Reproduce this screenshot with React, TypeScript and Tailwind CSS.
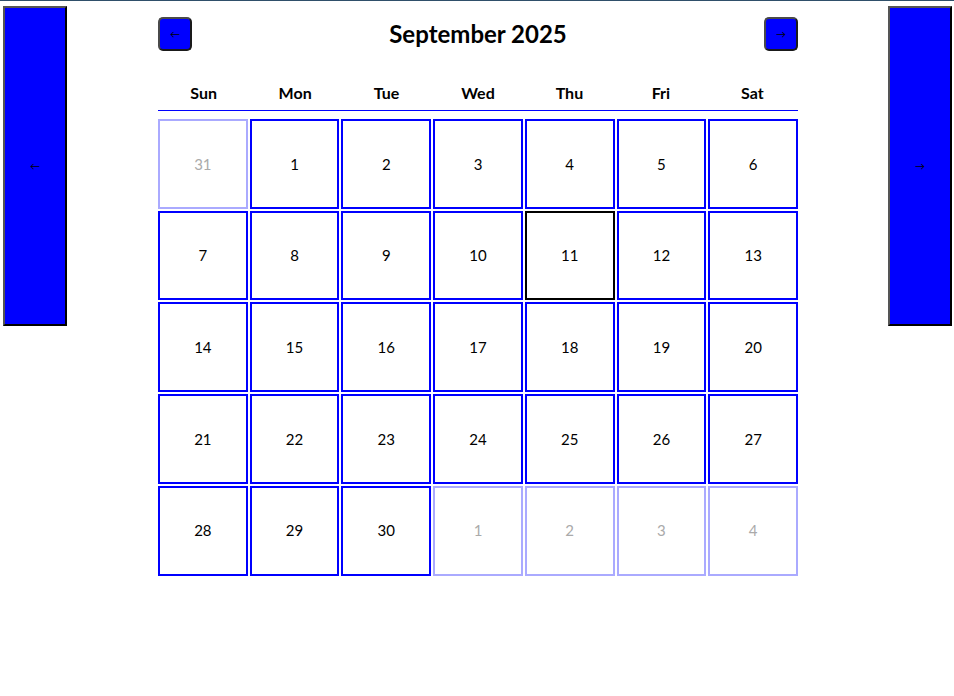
import React from "react";

const weekdays = ["Sun", "Mon", "Tue", "Wed", "Thu", "Fri", "Sat"];

type Day = { n: number; outside?: boolean; today?: boolean };

function buildDays(): Day[] {
  const days: Day[] = [{ n: 31, outside: true }];
  for (let i = 1; i <= 30; i++) days.push({ n: i, today: i === 11 });
  for (let i = 1; i <= 4; i++) days.push({ n: i, outside: true });
  return days;
}

function SideButton({ label }: { label: string }) {
  return (
    <button className="h-[320px] w-16 border-2 border-t-[#555] border-l-[#555] border-r-black border-b-black bg-[#0000ff] text-[10px] leading-none text-black">
      {label}
    </button>
  );
}

function NavButton({ label }: { label: string }) {
  return (
    <button className="flex h-[34px] w-[34px] items-center justify-center rounded-[5px] border-2 border-t-[#4a4a4a] border-l-[#4a4a4a] border-r-[#1a1a1a] border-b-[#1a1a1a] bg-[#0000ff] text-[10px] leading-none text-black">
      {label}
    </button>
  );
}

export default function App() {
  const days = buildDays();

  return (
    <div
      className="min-h-[696px] border-t border-[#2f4f6a] bg-white pl-[3px] pr-[2px] pt-[5px]"
      style={{ fontFamily: "Lato, 'Open Sans', sans-serif" }}
    >
      <div className="flex items-start justify-between">
        <SideButton label="←" />

        <div className="ml-[1px] mt-[11px] w-[640px]">
          <div className="flex items-center justify-between">
            <NavButton label="←" />
            <h1 className="text-[24px] font-bold leading-none text-black">
              September 2025
            </h1>
            <NavButton label="→" />
          </div>

          <div className="mt-[33px] grid grid-cols-7 border-b border-b-[#0000ff] pb-[8px]">
            {weekdays.map((d) => (
              <div key={d} className="text-center text-[16px] font-bold leading-[18px] text-black">
                {d}
              </div>
            ))}
          </div>

          <div className="mt-[8px] grid grid-cols-7 gap-[2px]">
            {days.map((d, i) => (
              <div
                key={i}
                className={`flex aspect-square items-center justify-center border-2 text-[15px] ${
                  d.outside
                    ? "border-[#aaaaff] text-[#aaaaaa]"
                    : d.today
                    ? "border-black text-black"
                    : "border-[#0000ff] text-black"
                }`}
              >
                {d.n}
              </div>
            ))}
          </div>
        </div>

        <SideButton label="→" />
      </div>
    </div>
  );
}
